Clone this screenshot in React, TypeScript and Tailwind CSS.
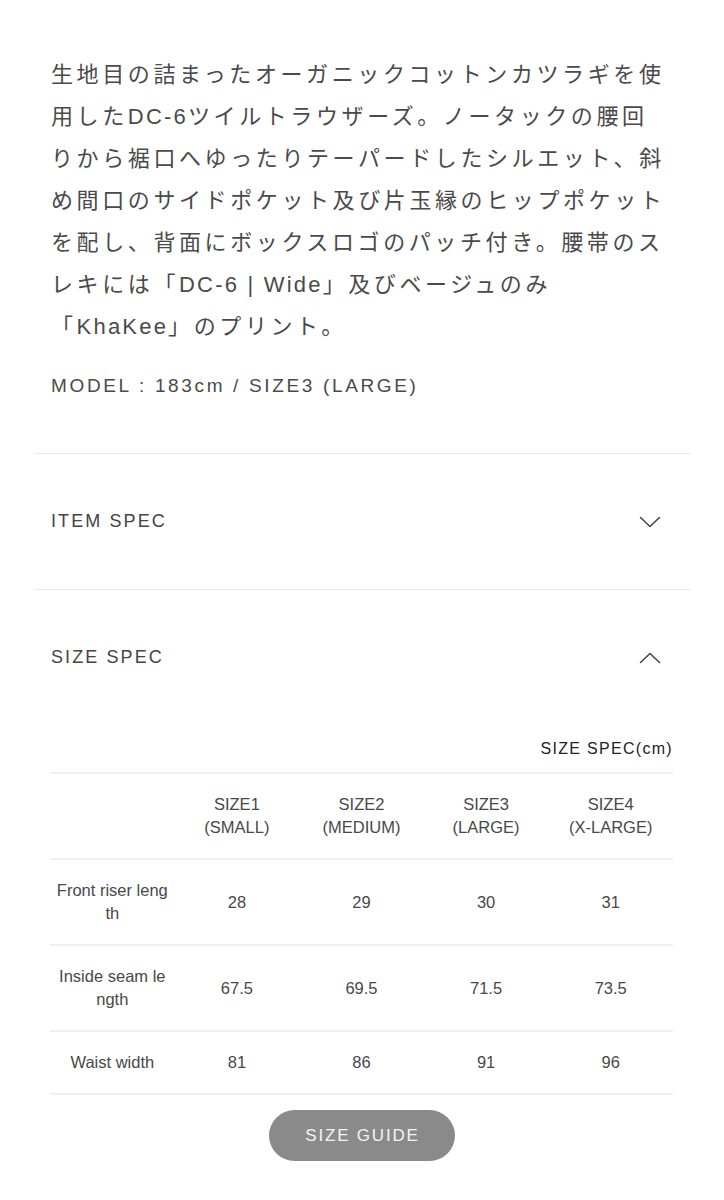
import React from "react";

const sizes = [
  ["SIZE1", "(SMALL)"],
  ["SIZE2", "(MEDIUM)"],
  ["SIZE3", "(LARGE)"],
  ["SIZE4", "(X-LARGE)"],
];

const rows: { label: string[]; values: string[] }[] = [
  { label: ["Front riser leng", "th"], values: ["28", "29", "30", "31"] },
  { label: ["Inside seam le", "ngth"], values: ["67.5", "69.5", "71.5", "73.5"] },
  { label: ["Waist width"], values: ["81", "86", "91", "96"] },
];

// latin runs in the copy are set a little tighter than the kana
function L({ children }: { children: React.ReactNode }) {
  return <span className="tracking-[2.2px]">{children}</span>;
}

function Chevron({ up }: { up?: boolean }) {
  return (
    <svg width="22" height="12" viewBox="0 0 22 12" fill="none" className="shrink-0">
      <polyline
        points={up ? "1.5,10.5 11,1.5 20.5,10.5" : "1.5,1.5 11,10.5 20.5,1.5"}
        stroke="#444"
        strokeWidth="1.5"
        strokeLinecap="round"
        strokeLinejoin="round"
      />
    </svg>
  );
}

function AccordionHeader({ title, open }: { title: string; open?: boolean }) {
  return (
    <div className="flex h-[135px] items-center justify-between pl-[17px] pr-[29px]">
      <span className="text-[18px] tracking-[2.1px] text-[#444]">{title}</span>
      <Chevron up={open} />
    </div>
  );
}

export default function App() {
  return (
    <div className="min-h-[1200px] w-[724px] bg-white px-[34px] pt-[54px] font-['Liberation_Sans','Noto_Sans_CJK_JP',sans-serif] text-[#444]">
      <div className="px-[17px]">
        <div className="whitespace-nowrap text-[22px] leading-[42px] tracking-[3.6px] text-[#4a4a4a]">
          <div>生地目の詰まったオーガニックコットンカツラギを使</div>
          <div>
            用した<L>DC-6</L>ツイルトラウザーズ。ノータックの腰回
          </div>
          <div>りから裾口へゆったりテーパードしたシルエット、斜</div>
          <div>め間口のサイドポケット及び片玉縁のヒップポケット</div>
          <div>を配し、背面にボックスロゴのパッチ付き。腰帯のス</div>
          <div>
            レキには「<L>DC-6 | Wide</L>」及びベージュのみ
          </div>
          <div>
            「<L>KhaKee</L>」のプリント。
          </div>
        </div>
        <p className="mt-[24px] text-[19px] leading-[28px] tracking-[2.65px] text-[#4a4a4a]">
          MODEL : 183cm / SIZE3 (LARGE)
        </p>
      </div>

      <div className="mt-[53px] border-t border-[#e8e8e8]">
        <div className="border-b border-[#e8e8e8]">
          <AccordionHeader title="ITEM SPEC" />
        </div>
        <AccordionHeader title="SIZE SPEC" open />

        <div className="pl-[16px] pr-[17px] pt-[13px]">
          <p className="text-right text-[16px] leading-[22px] tracking-[1.3px] text-[#222]">
            SIZE SPEC(cm)
          </p>
          <table className="mt-[12px] w-full table-fixed border-collapse text-center text-[16.5px] leading-[23px] text-[#484848]">
            <thead>
              <tr className="border-y-2 border-[#f0f0f0]">
                <th className="py-[19px] font-normal"></th>
                {sizes.map((s) => (
                  <th key={s[0]} className="py-[19px] font-normal">
                    {s[0]}
                    <br />
                    {s[1]}
                  </th>
                ))}
              </tr>
            </thead>
            <tbody>
              {rows.map((r) => (
                <tr key={r.label[0]} className="border-b-2 border-[#f0f0f0]">
                  <td className="py-[19px]">
                    {r.label.map((t, i) => (
                      <div key={i}>{t}</div>
                    ))}
                  </td>
                  {r.values.map((v) => (
                    <td key={v} className="py-[19px]">
                      {v}
                    </td>
                  ))}
                </tr>
              ))}
            </tbody>
          </table>
          <div className="mt-[15px] flex justify-center">
            <button className="flex h-[51px] w-[186px] items-center justify-center rounded-full bg-[#8a8a8a] pl-[2px] text-[17px] tracking-[1.8px] text-[#f4f4f4]">
              SIZE GUIDE
            </button>
          </div>
        </div>
      </div>
    </div>
  );
}
